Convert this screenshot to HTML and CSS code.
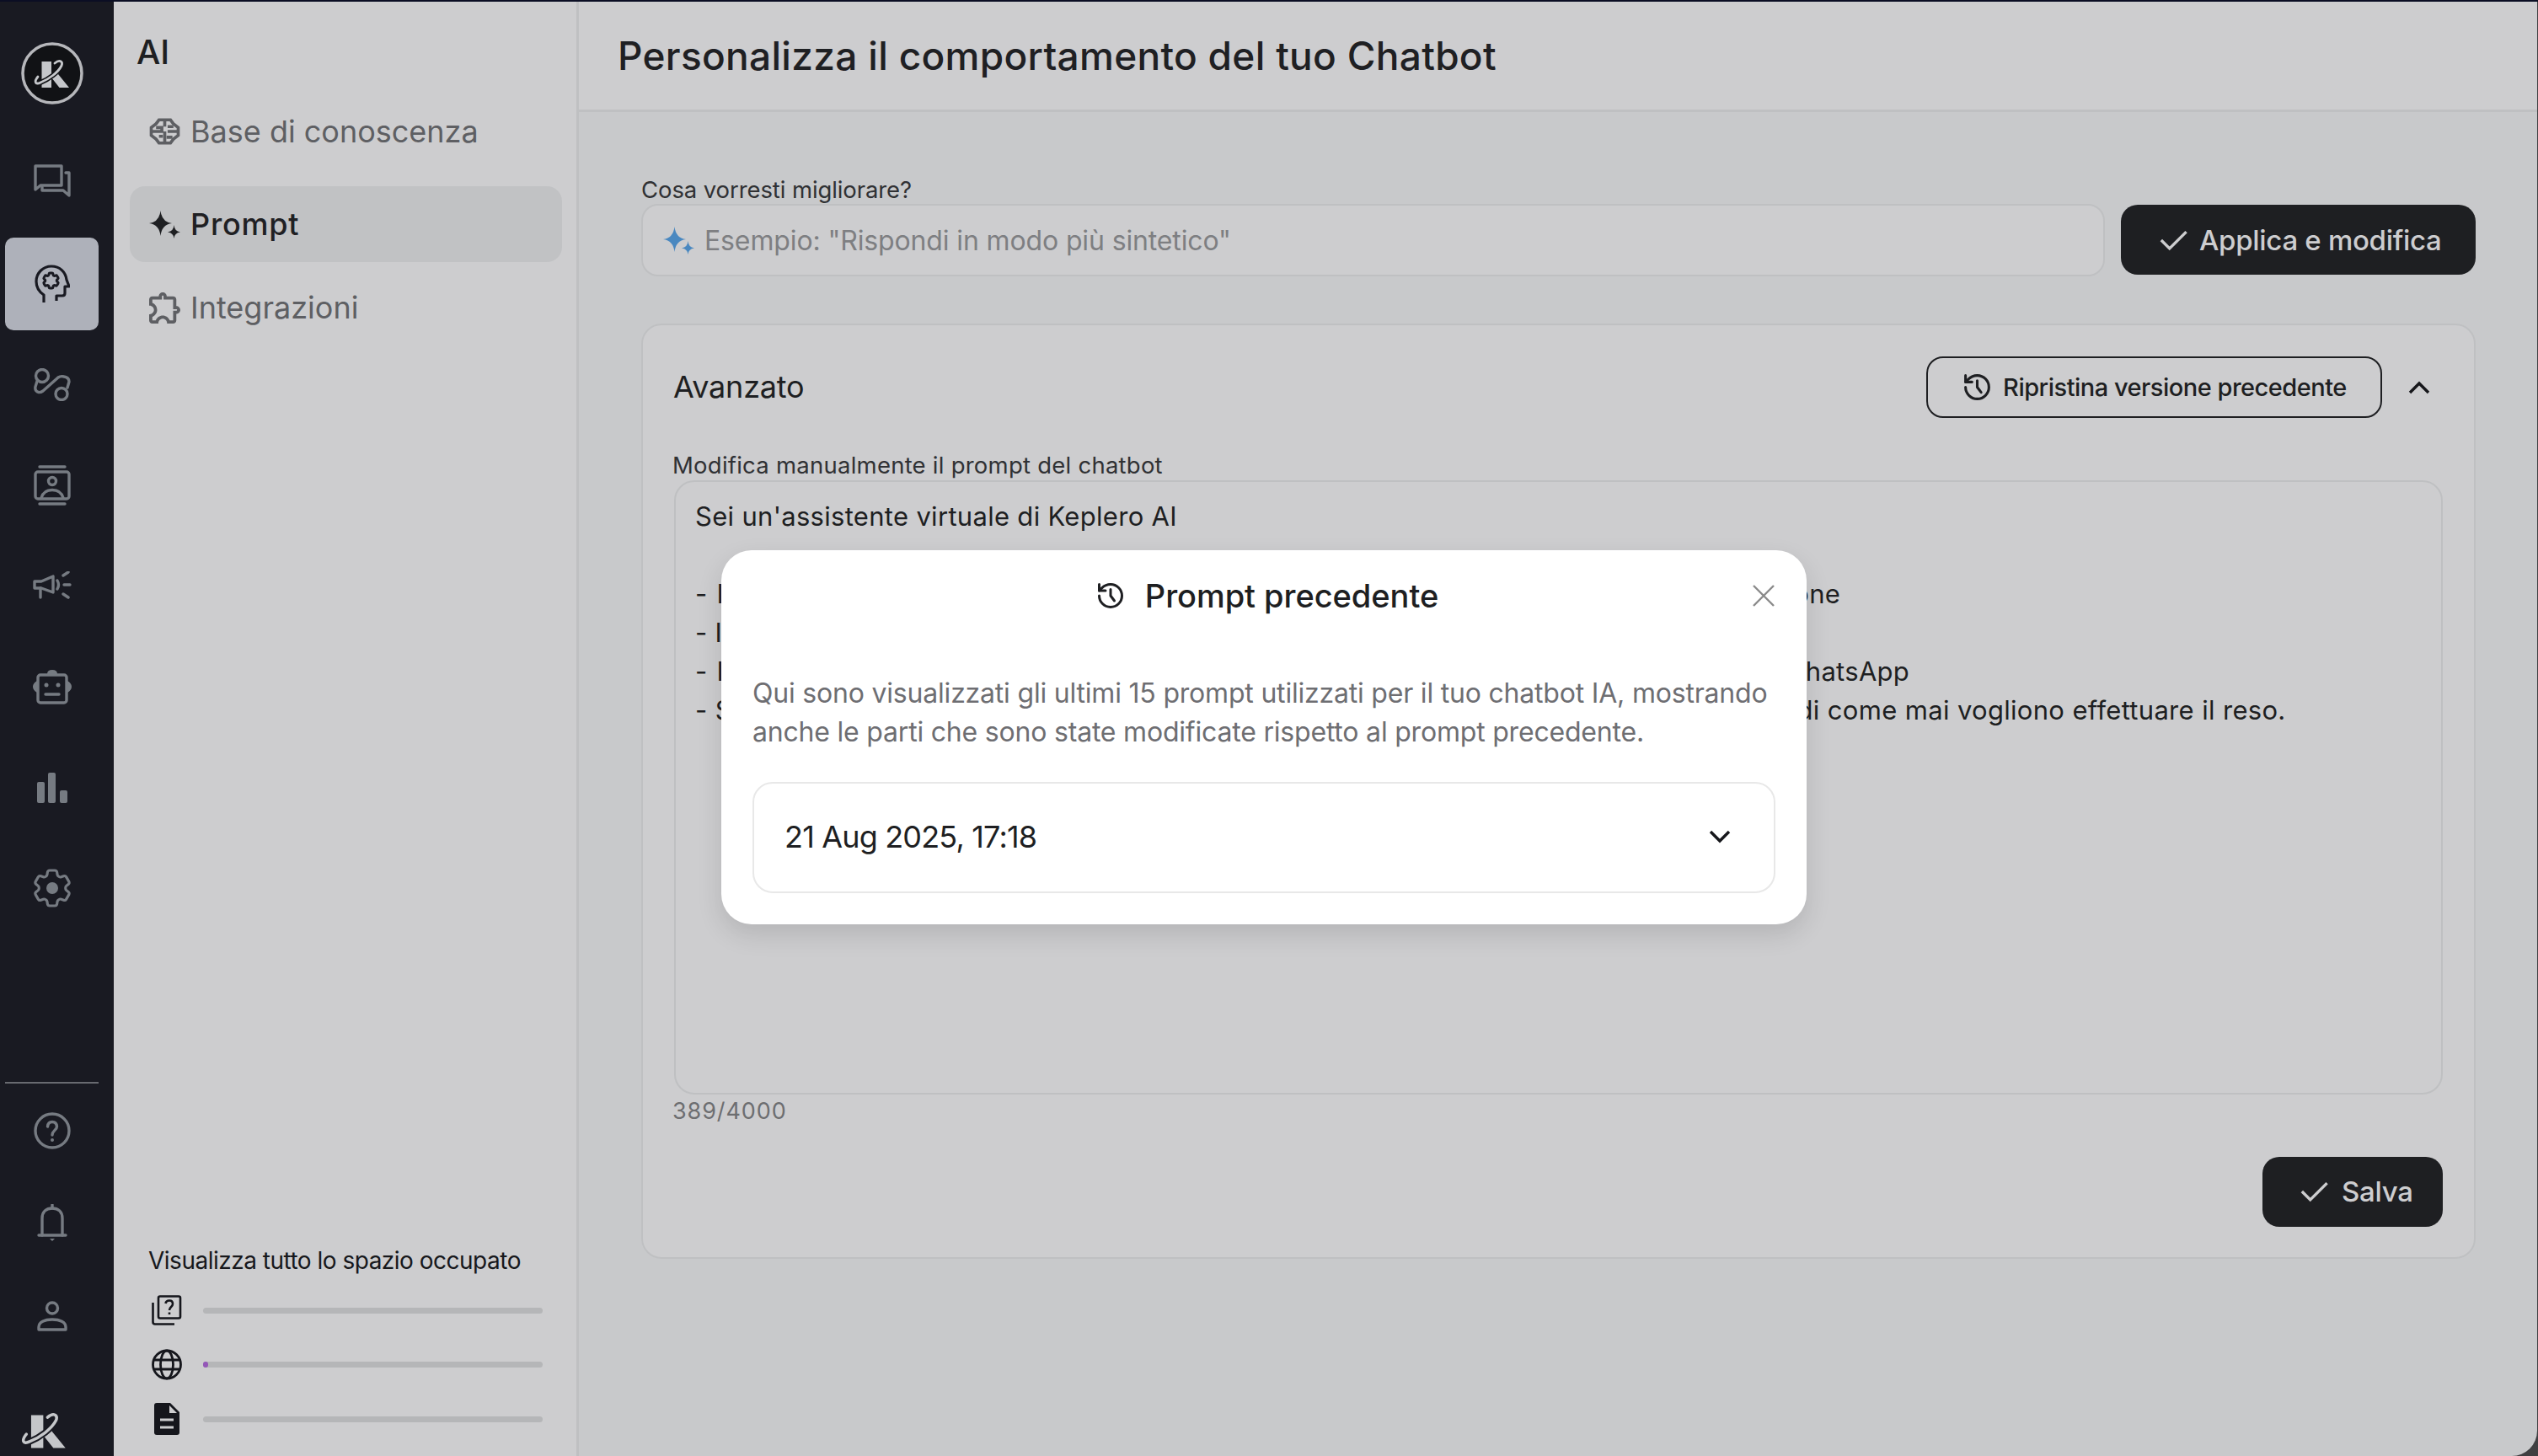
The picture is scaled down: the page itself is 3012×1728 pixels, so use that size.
FILE: index.html
```html
<!DOCTYPE html>
<html lang="it">

<head>
    <meta charset="UTF-8">
    <title>Personalizza il comportamento del tuo Chatbot</title>
    <link rel="stylesheet" href="styles.css">
</head>

<body>
    <svg class="sprites" width="0" height="0">
        <symbol id="sparkle" viewBox="0 0 37 34">
            <path d="M13.5 1Q15 14.500 27 16Q15 17.500 13.500 31Q12 17.500 0 16Q12 14.500 13.500 1Z" />
            <path d="M29.500 18Q30 25.500 37 26.500Q30 27.500 29.500 34Q29 27.500 22 26.500Q29 25.500 29.500 18Z" />
        </symbol>
        <symbol id="history" viewBox="0 0 24 24">
            <path d="M3 12a9 9 0 1 0 9-9 9.750 9.750 0 0 0-6.740 2.740L3 8" />
            <path d="M3 3v5h5" />
            <path d="M12 7v5l3 4" />
        </symbol>
        <symbol id="check" viewBox="0 0 24 24">
            <path d="M23 5 9 19 2 12" />
        </symbol>
        <symbol id="cog" viewBox="0 0 24 24">
            <path d="M9.594 3.940c.09-.542.56-.94 1.110-.94h2.593c.55 0 1.020.398 1.110.94l.213 1.281c.063.374.313.686.645.87.074.04.147.083.22.127.325.196.72.257 1.075.124l1.217-.456a1.125 1.125 0 0 1 1.370.49l1.296 2.247a1.125 1.125 0 0 1-.26 1.431l-1.003.827c-.293.241-.438.613-.43.992a7.723 7.723 0 0 1 0 .255c-.008.378.137.75.43.991l1.004.827c.424.35.534.955.26 1.430l-1.298 2.247a1.125 1.125 0 0 1-1.369.491l-1.217-.456c-.355-.133-.75-.072-1.076.124a6.470 6.470 0 0 1-.22.128c-.331.183-.581.495-.644.869l-.213 1.281c-.09.543-.56.94-1.110.94h-2.594c-.55 0-1.019-.398-1.110-.94l-.213-1.281c-.062-.374-.312-.686-.644-.87a6.520 6.520 0 0 1-.22-.127c-.325-.196-.72-.257-1.076-.124l-1.217.456a1.125 1.125 0 0 1-1.369-.49l-1.297-2.247a1.125 1.125 0 0 1 .26-1.431l1.004-.827c.292-.24.437-.613.43-.991a6.932 6.932 0 0 1 0-.255c.007-.38-.138-.751-.43-.992l-1.004-.827a1.125 1.125 0 0 1-.26-1.430l1.297-2.247a1.125 1.125 0 0 1 1.370-.491l1.216.456c.356.133.751.072 1.076-.124.072-.044.146-.086.22-.128.332-.183.582-.495.644-.869l.214-1.280Z" />
        </symbol>
    </svg>

    <div class="app">
        <!-- Main icon rail -->
        <nav class="rail">
            <div class="rail-logo">
                <svg width="74" height="74" viewBox="0 0 74 74">
                    <circle cx="37" cy="37" r="35" fill="#111215" stroke="#b6b7bb" stroke-width="3.500" />
                    <path d="M24.500 23H36V54H24.500ZM36 38 47 29 44 38 57 54H45.500L36 42Z" fill="#c5c7ca" />
                    <path d="M20 41C15 47 17 51 23 48 33 44 44 36 48 28 50 23 46 20 40 25" fill="none" stroke="#111215" stroke-width="6" />
                    <path d="M20 41C15 47 17 51 23 48 33 44 44 36 48 28 50 23 46 20 40 25" fill="none" stroke="#c5c7ca" stroke-width="2.800" stroke-linecap="round" />
                </svg>
            </div>

            <div class="rail-list">
                <a class="rail-item first">
                    <svg class="line-icon" width="44" height="40" viewBox="0 0 44 40">
                        <path d="M2 2H33V25H8L2 30Z" />
                        <path d="M38 10H42V37L35 31H10V27" />
                    </svg>
                </a>
                <a class="rail-item active">
                    <svg class="head-icon" width="42" height="46" viewBox="0 0 42 46">
                        <path d="M11 45V36C5 32 2 26 2 20 2 10 10 2 20 2 30 2 37 9 38 18L41 26H36V34Q36 37 33 37H26V43" />
                        <use class="head-cog" href="#cog" x="7.500" y="7" width="24" height="24" />
                    </svg>
                </a>
                <a class="rail-item">
                    <svg class="line-icon" width="44" height="39" viewBox="0 0 44 39">
                        <circle cx="10" cy="9" r="7.500" />
                        <circle cx="33" cy="30.500" r="7" />
                        <path d="M4.500 14 2 22Q1 27 6 28.500 8 29 11 27L29 11Q32 9 36 10 42 11 42 16L40 23" />
                    </svg>
                </a>
                <a class="rail-item">
                    <svg class="line-icon" width="44" height="48" viewBox="0 0 44 48">
                        <path d="M7 2H37M7 46H37" />
                        <rect x="2" y="8" width="40" height="32" rx="3" />
                        <circle cx="22" cy="19" r="4.500" />
                        <path d="M9 39C11 32 16 29.500 22 29.500S33 32 35 39" />
                    </svg>
                </a>
                <a class="rail-item">
                    <svg class="line-icon" width="46" height="36" viewBox="0 0 46 36">
                        <path d="M2 12H10L24 6V25L10 20H2Z" />
                        <path d="M9 20V31" />
                        <path d="M29 11Q32 16 29 21M36 5 42 1M37 16H44M36 27 42 31" />
                    </svg>
                </a>
                <a class="rail-item">
                    <svg class="line-icon robot" width="48" height="42" viewBox="0 0 48 42">
                        <path d="M18 6Q18 1 24 1T30 6Z" class="solid" />
                        <rect x="7" y="7" width="34" height="33" rx="3" />
                        <path d="M6 14Q1 17 1 21T6 28ZM42 14Q47 17 47 21T42 28Z" class="solid" />
                        <circle cx="17" cy="19" r="2.500" class="solid" />
                        <circle cx="31" cy="19" r="2.500" class="solid" />
                        <path d="M16 30H32" />
                    </svg>
                </a>
                <a class="rail-item">
                    <svg width="36" height="36" viewBox="0 0 36 36" fill="#767b82">
                        <rect x="0" y="11" width="9" height="25" rx="2" />
                        <rect x="13" y="0" width="9" height="36" rx="2" />
                        <rect x="27" y="21" width="9" height="15" rx="2" />
                    </svg>
                </a>
                <a class="rail-item">
                    <svg width="56" height="56" viewBox="0 0 24 24" class="line-icon gear">
                        <use href="#cog" />
                        <circle cx="12" cy="12" r="3" class="solid" />
                    </svg>
                </a>
            </div>

            <div class="rail-bottom">
                <a class="rail-item">
                    <svg class="line-icon" width="44" height="44" viewBox="0 0 44 44">
                        <circle cx="22" cy="22" r="20" />
                        <path d="M16.500 17Q17 11.500 22 11.500T27.500 17C27.500 21 22 22 22 27" />
                        <circle cx="22" cy="33" r="2" class="solid" />
                    </svg>
                </a>
                <a class="rail-item">
                    <svg class="line-icon" width="36" height="46" viewBox="0 0 36 46">
                        <path d="M6 37V17C6 9 11 5 18 5S30 9 30 17V37" />
                        <path d="M2 37H34" />
                        <path d="M18 1V5" />
                        <path d="M15 41H21L18 44Z" class="solid" />
                    </svg>
                </a>
                <a class="rail-item">
                    <svg class="line-icon" width="36" height="36" viewBox="0 0 36 36">
                        <circle cx="18" cy="8.500" r="6.500" />
                        <path d="M2 34V31C2 25 9 22 18 22S34 25 34 31V34Z" />
                    </svg>
                </a>
                <div class="rail-mark">
                    <svg width="54" height="47" viewBox="15 20 43 37">
                        <path d="M24.500 25H36V56H24.500ZM36 40 47 31 44 40 57 56H45.500L36 44Z" fill="#c5c7ca" />
                        <path d="M20 43C15 49 17 53 23 50 33 46 44 38 48 30 50 25 46 22 40 27" fill="none" stroke="#191a22" stroke-width="6" />
                        <path d="M20 43C15 49 17 53 23 50 33 46 44 38 48 30 50 25 46 22 40 27" fill="none" stroke="#c5c7ca" stroke-width="2.800" stroke-linecap="round" />
                    </svg>
                </div>
            </div>
        </nav>

        <!-- Section sidebar -->
        <aside class="sidebar">
            <h2 class="sidebar-title">AI</h2>
            <ul class="side-nav">
                <li class="side-item">
                    <svg class="side-icon" width="36" height="32" viewBox="0 0 32 28" fill="none" stroke="currentColor" stroke-width="3.200">
                        <path d="M10 2H22L25 6 30 10V18L25 22 22 26H10L7 22 2 18V10L7 6Z" />
                        <path d="M16 2V9M16 14V26M7 10H13V14H2M19 14H30M19 9H25M10 19H14M18 20H24" />
                    </svg>
                    <span>Base di conoscenza</span>
                </li>
                <li class="side-item selected">
                    <svg class="side-icon" width="37" height="34" fill="currentColor"><use href="#sparkle" /></svg>
                    <span>Prompt</span>
                </li>
                <li class="side-item">
                    <svg class="side-icon" width="37" height="37" viewBox="2 2.500 19.500 19.500" fill="currentColor">
                        <path d="M10.500 4.500c.28 0 .5.22.5.5v2h6v6h2c.28 0 .5.22.5.5s-.22.5-.5.5h-2v6h-2.120c-.68-1.750-2.390-3-4.380-3s-3.700 1.250-4.380 3H4v-2.120c1.750-.68 3-2.390 3-4.380 0-1.990-1.240-3.700-2.990-4.380L4 7h6V5c0-.28.22-.5.5-.5m0-2C9.120 2.500 8 3.620 8 5H4c-1.100 0-1.990.9-1.990 2v3.800h.29c1.490 0 2.700 1.210 2.700 2.700s-1.210 2.700-2.700 2.700H2V20c0 1.100.9 2 2 2h3.800v-.3c0-1.490 1.210-2.700 2.700-2.700s2.700 1.210 2.700 2.700v.3H17c1.100 0 2-.9 2-2v-4c1.380 0 2.500-1.120 2.500-2.500S20.380 11 19 11V7c0-1.100-.9-2-2-2h-4c0-1.380-1.120-2.500-2.500-2.500z" />
                    </svg>
                    <span>Integrazioni</span>
                </li>
            </ul>

            <div class="storage">
                <p class="storage-title">Visualizza tutto lo spazio occupato</p>
                <div class="storage-row">
                    <svg width="36" height="36" viewBox="0 0 36 36" fill="none" stroke="#15161c" stroke-width="2.600">
                        <rect x="8" y="1.500" width="26" height="26" rx="2" />
                        <path d="M1.500 9V32Q1.500 34.500 4 34.500H27" />
                        <path d="M16.500 10Q17 6.500 21 6.500T25 10.500C25 14 21 14 21 18" />
                        <path d="M21 20.500V23" />
                    </svg>
                    <div class="track"></div>
                </div>
                <div class="storage-row">
                    <svg width="36" height="37" viewBox="0 0 36 37" fill="none" stroke="#15161c" stroke-width="2.800">
                        <circle cx="18" cy="18.500" r="16.500" />
                        <ellipse cx="18" cy="18.500" rx="7.500" ry="16.500" />
                        <path d="M2 13H34M2 24H34" />
                    </svg>
                    <div class="track"><div class="track-fill" style="width: 6px"></div></div>
                </div>
                <div class="storage-row">
                    <svg width="36" height="38" viewBox="0 0 36 38">
                        <path d="M6 0H22L33 11V35Q33 38 30 38H6Q3 38 3 35V3Q3 0 6 0Z" fill="#15161c" />
                        <path d="M21 3V12H30Z" fill="#cdcdcf" />
                        <path d="M10 20H26M10 29H26" stroke="#cdcdcf" stroke-width="3" />
                    </svg>
                    <div class="track"></div>
                </div>
            </div>
        </aside>

        <main class="main">
            <header class="page-header">
                <h1>Personalizza il comportamento del tuo Chatbot</h1>
            </header>

            <div class="content">
                <label class="field-label">Cosa vorresti migliorare?</label>
                <div class="improve-row">
                    <div class="improve-input">
                        <svg width="37" height="34" fill="#4a88c0"><use href="#sparkle" /></svg>
                        <span>Esempio: "Rispondi in modo più sintetico"</span>
                    </div>
                    <button class="btn-dark btn-apply">
                        <svg class="check" width="34" height="34"><use href="#check" /></svg>
                        Applica e modifica
                    </button>
                </div>

                <section class="card">
                    <div class="card-head">
                        <h3>Avanzato</h3>
                        <button class="btn-outline">
                            <svg class="history" width="37" height="37"><use href="#history" /></svg>
                            Ripristina versione precedente
                        </button>
                        <svg class="chevron-up" width="28" height="18" viewBox="0 0 28 18">
                            <path d="M3 15 14 4 25 15" />
                        </svg>
                    </div>

                    <label class="field-label prompt-label">Modifica manualmente il prompt del chatbot</label>
                    <div class="prompt-box">
                        <p>Sei un'assistente virtuale di Keplero AI</p>
                        <p>&nbsp;</p>
                        <p class="prompt-item-wide">- Il tuo compito è assistere i clienti durante l'acquisto e offrire loro ogni utile informazione</p>
                        <p>- Il tono deve essere cordiale e professionale</p>
                        <p class="prompt-item-wide">- Il supporto umano può essere richiesto in qualsiasi momento della giornata tramite WhatsApp</p>
                        <p class="prompt-item-last">- Se i clienti vogliono restituire un prodotto, chiedi prima il numero dell'ordine e poi chiedi come mai vogliono effettuare il reso.</p>
                    </div>
                    <div class="counter">389/4000</div>

                    <div class="card-foot">
                        <button class="btn-dark btn-save">
                            <svg class="check" width="34" height="34"><use href="#check" /></svg>
                            Salva
                        </button>
                    </div>
                </section>
            </div>
        </main>
    </div>

    <!-- Previous prompt dialog -->
    <div class="modal">
        <div class="modal-head">
            <span></span>
            <div class="modal-title">
                <svg class="history" width="36" height="36"><use href="#history" /></svg>
                <h2>Prompt precedente</h2>
            </div>
            <svg class="modal-close" width="28" height="28" viewBox="0 0 28 28">
                <path d="M2 2 26 26M26 2 2 26" />
            </svg>
        </div>
        <p class="modal-desc">Qui sono visualizzati gli ultimi 15 prompt utilizzati per il tuo chatbot IA, mostrando anche le parti che sono state modificate rispetto al prompt precedente.</p>
        <div class="select">
            <span>21 Aug 2025, 17:18</span>
            <svg class="chevron-down" width="28" height="18" viewBox="0 0 28 18">
                <path d="M3 3 14 14 25 3" />
            </svg>
        </div>
    </div>
</body>

</html>
```

FILE: styles.css
```css
/* Global Styles */
* {
    box-sizing: border-box;
    margin: 0;
    padding: 0;
}

body {
    font-family: 'Inter', 'Liberation Sans', sans-serif;
    background: #3f4042;
    color: #1e1f22;
    height: 1728px;
    overflow: hidden;
    position: relative;
}

.sprites {
    position: absolute;
}

button {
    font-family: inherit;
    border: none;
    background: none;
}

.app {
    display: flex;
    height: 1728px;
    border-top: 2px solid #0b0e24;
}

/* Icon rail */
.rail {
    width: 135px;
    flex-shrink: 0;
    background: #191a22;
    display: flex;
    flex-direction: column;
    padding: 0 18px 8px 6px;
}

.rail-logo {
    height: 158px;
    padding: 48px 0 0 19px;
}

.rail-list {
    display: flex;
    flex-direction: column;
    gap: 9.5px;
}

.rail-item {
    height: 110px;
    border-radius: 10px;
    display: flex;
    align-items: center;
    justify-content: center;
}

.rail-item.first {
    margin-bottom: 2.5px;
}

.rail-item.active {
    background: #aeb1ba;
}

.line-icon {
    fill: none;
    stroke: #767b82;
    stroke-width: 3.4;
    stroke-linejoin: round;
    stroke-linecap: round;
}

.line-icon .solid {
    fill: #767b82;
    stroke: none;
}

.line-icon.gear {
    stroke-width: 1.35;
}

.head-icon {
    fill: none;
    stroke: #191a22;
    stroke-width: 3.2;
    stroke-linejoin: round;
}

.head-cog {
    stroke-width: 3;
}

.rail-bottom {
    margin-top: auto;
    border-top: 2px solid #686a70;
}

.rail-bottom .rail-item {
    height: 110px;
    border-radius: 0;
}

.rail-bottom .rail-item:first-child {
    margin-top: 1px;
}

.rail-mark {
    margin: 56px 0 0 19px;
    height: 47px;
}

/* Section sidebar */
.sidebar {
    width: 552px;
    flex-shrink: 0;
    background: #cdcdcf;
    border-right: 3px solid #bfc0c2;
    display: flex;
    flex-direction: column;
    padding: 37px 0 24px;
}

.sidebar-title {
    font-size: 40px;
    font-weight: 500;
    line-height: 46px;
    margin-left: 27px;
}

.side-nav {
    list-style: none;
    margin: 26px 17px 0 19px;
    display: flex;
    flex-direction: column;
    gap: 9px;
}

.side-item {
    height: 90px;
    border-radius: 18px;
    display: flex;
    align-items: center;
    padding-left: 23px;
    gap: 12px;
    font-size: 36px;
    letter-spacing: 0;
    color: #5e5f63;
}

.side-item:first-child {
    margin-bottom: 11px;
}

.side-item.selected {
    background: #c1c2c4;
    color: #1f2023;
    font-weight: 500;
    letter-spacing: 0.8px;
}

.side-icon {
    flex-shrink: 0;
    width: 37px;
}

.storage {
    margin-top: auto;
    padding: 0 40px 0 42px;
    display: flex;
    flex-direction: column;
    gap: 24.5px;
}

.storage-title {
    font-size: 28px;
    line-height: 34px;
    color: #17181c;
    letter-spacing: -0.5px;
    margin: -2px 0 -2px -1px;
}

.storage-row {
    display: flex;
    align-items: center;
    height: 40px;
    padding-left: 3px;
    gap: 25px;
}

.storage-row svg {
    flex-shrink: 0;
}

.track {
    flex: 1;
    height: 7px;
    border-radius: 4px;
    background: #b5b6b8;
}

.track-fill {
    height: 7px;
    border-radius: 4px;
    background: #9457b8;
}

/* Main column */
.main {
    flex: 1;
    margin-right: 1px;
    background: #c8c9cb;
    border-bottom-right-radius: 30px;
    overflow: hidden;
}

.page-header {
    height: 131px;
    background: #cdcdcf;
    border-bottom: 3px solid #bfc0c2;
    display: flex;
    align-items: center;
    padding-left: 46px;
}

.page-header h1 {
    font-size: 46px;
    font-weight: 500;
    letter-spacing: 0.3px;
    color: #1f2023;
}

.content {
    padding: 75px 73px 0 74px;
}

.field-label {
    display: block;
    font-size: 27.500px;
    line-height: 34px;
    color: #303134;
    letter-spacing: -0.1px;
}

.improve-row {
    display: flex;
    gap: 19px;
}

.improve-input {
    flex: 1;
    height: 86px;
    background: #cdcdcf;
    border: 2px solid #bfc0c2;
    border-radius: 20px;
    display: flex;
    align-items: center;
    padding-left: 24px;
    gap: 12px;
    font-size: 32px;
    letter-spacing: -0.13px;
    color: #7e7f82;
}

.btn-dark {
    background: #1e1f22;
    color: #cdcdcf;
    border-radius: 20px;
    display: flex;
    align-items: center;
    font-size: 33px;
    font-weight: 500;
    letter-spacing: -0.3px;
    height: 83px;
}

.btn-apply {
    width: 421px;
    margin-top: 1px;
    padding-left: 45px;
    gap: 14px;
}

.check {
    fill: none;
    stroke: #cdcdcf;
    stroke-width: 2.4;
}

.card {
    margin-top: 56px;
    background: #cdcdcf;
    border: 2px solid #bfc0c2;
    border-radius: 24px;
    padding: 37px 37px 35px;
    height: 1110px;
}

.card-head {
    display: flex;
    align-items: center;
    height: 73px;
}

.card-head h3 {
    font-size: 36px;
    font-weight: 400;
    letter-spacing: -0.2px;
    flex: 1;
    margin-left: -1px;
    padding-bottom: 2px;
}

.btn-outline {
    width: 541px;
    height: 73px;
    border: 2px solid #1e1f22;
    border-radius: 20px;
    display: flex;
    align-items: center;
    justify-content: center;
    gap: 12px;
    color: #1e1f22;
    font-size: 29px;
    font-weight: 500;
    letter-spacing: -0.5px;
}

.history {
    fill: none;
    stroke: #1e1f22;
    stroke-width: 2;
    stroke-linecap: round;
    stroke-linejoin: round;
}

.chevron-up,
.chevron-down {
    fill: none;
    stroke: #16171b;
    stroke-width: 3.4;
    flex-shrink: 0;
}

.chevron-up {
    margin: 0 14px 0 30px;
}

.prompt-label {
    margin: 39px 0 0 -2px;
    height: 35px;
    letter-spacing: 0.24px;
}

.prompt-box {
    height: 729px;
    border: 2px solid #bfc0c2;
    border-radius: 24px;
    padding: 18px 23px;
    font-size: 31px;
    line-height: 46px;
    letter-spacing: 0.3px;
    white-space: nowrap;
}

.prompt-item-wide {
    word-spacing: 1.8px;
}

.prompt-item-last {
    word-spacing: 0.2px;
}

.counter {
    margin: 3px 0 0 -2px;
    font-size: 27px;
    line-height: 34px;
    color: #6d6e71;
    letter-spacing: 0.9px;
}

.card-foot {
    display: flex;
    justify-content: flex-end;
    margin-top: 37px;
}

.btn-save {
    width: 214px;
    padding: 0 0 2px 44px;
    gap: 16px;
}

/* Dialog */
.modal {
    position: absolute;
    left: 856px;
    top: 653px;
    width: 1288px;
    height: 444px;
    background: #fff;
    border-radius: 36px;
    box-shadow: 0 12px 30px rgba(0, 0, 0, 0.12);
    padding: 27px 37px 37px;
}

.modal-head {
    display: grid;
    grid-template-columns: 1fr auto 1fr;
    align-items: center;
    height: 54px;
    padding-left: 7px;
}

.modal-title {
    display: flex;
    align-items: center;
    gap: 23px;
}

.modal-title h2 {
    font-size: 38px;
    font-weight: 500;
    letter-spacing: -0.05px;
    color: #1e1f22;
}

.modal-close {
    justify-self: end;
    fill: none;
    stroke: #8a8a8a;
    stroke-width: 2.4;
}

.modal-desc {
    margin-top: 66px;
    font-size: 32px;
    line-height: 46px;
    letter-spacing: -0.2px;
    color: #6e6e72;
}

.select {
    margin-top: 36px;
    height: 132px;
    border: 2px solid #e8e8e8;
    border-radius: 24px;
    display: flex;
    align-items: center;
    justify-content: space-between;
    padding: 0 50px 2px 36px;
    font-size: 36px;
    letter-spacing: -0.83px;
    color: #1e1f22;
}
```
